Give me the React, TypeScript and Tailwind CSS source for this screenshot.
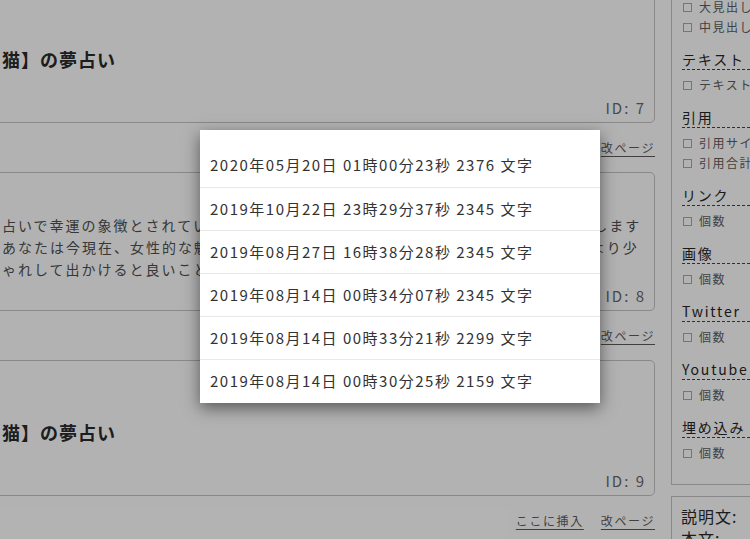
import React from "react";

const rows = [
    "2020年05月20日 01時00分23秒 2376 文字",
    "2019年10月22日 23時29分37秒 2345 文字",
    "2019年08月27日 16時38分28秒 2345 文字",
    "2019年08月14日 00時34分07秒 2345 文字",
    "2019年08月14日 00時33分21秒 2299 文字",
    "2019年08月14日 00時30分25秒 2159 文字",
];

const bodyLines = [
    "占いで幸運の象徴とされている猫の夢はあなたに幸せな出来事が訪れることを暗示します",
    "あなたは今現在、女性的な魅力が高まっている時期です。普段の服装やメイクを、より少",
    "ゃれして出かけると良いことが起こるでしょう。",
];

type SideGroup = { title: string; items: string[] };

const groups: SideGroup[] = [
    { title: "テキスト", items: ["テキスト数"] },
    { title: "引用", items: ["引用サイト", "引用合計"] },
    { title: "リンク", items: ["個数"] },
    { title: "画像", items: ["個数"] },
    { title: "Twitter", items: ["個数"] },
    { title: "Youtube", items: ["個数"] },
    { title: "埋め込み", items: ["個数"] },
];

function CheckItem({ label }: { label: string }) {
    return (
        <div className="flex h-[20px] items-center gap-[7px] whitespace-nowrap text-[12px] tracking-[1.5px] text-[#5e5e5e]">
            <span className="h-[9px] w-[9px] shrink-0 border border-[#aaa] bg-white" />
            <span>{label}</span>
        </div>
    );
}

function LinkRow() {
    return (
        <div className="flex h-[49px] items-center justify-end gap-[17px] text-[12px] tracking-[1.6px] text-[#5c5c5c]">
            <span className="underline underline-offset-[3px]">ここに挿入</span>
            <span className="underline underline-offset-[3px]">改ページ</span>
        </div>
    );
}

function TitleCard({ id }: { id: number }) {
    return (
        <div className="flex h-[136px] flex-col rounded-[5px] border border-[#c4c4c4] bg-white pl-[21px] pr-[8px] pt-[58px]">
            <div className="text-[18px] font-bold leading-[27px] tracking-[1px] text-[#2a2a2a]">
                猫】の夢占い
            </div>
            <div className="mt-auto pb-[4px] text-right text-[15px] leading-[20px] tracking-[2px] text-[#6a6a6a]">
                ID: {id}
            </div>
        </div>
    );
}

function TextCard({ id }: { id: number }) {
    return (
        <div className="flex h-[139px] flex-col rounded-[5px] border border-[#c4c4c4] bg-white pl-[21px] pr-[8px] pt-[41px]">
            <div className="text-[14px] leading-[22px] tracking-[2px] text-[#505050]">
                {bodyLines.map(line => (
                    <div key={line} className="whitespace-nowrap">
                        {line}
                    </div>
                ))}
            </div>
            <div className="mt-auto pb-[4px] text-right text-[15px] leading-[20px] tracking-[2px] text-[#6a6a6a]">
                ID: {id}
            </div>
        </div>
    );
}

export default function App() {
    return (
        <div className="relative h-[539px] w-[750px] overflow-hidden bg-white font-['Noto_Sans_CJK_JP','Noto_Sans',sans-serif]">
            <div className="flex gap-[16px]">
                {/* 記事カード列（左にスクロールされた状態） */}
                <div className="-ml-[20px] -mt-[13px] flex w-[675px] shrink-0 flex-col">
                    <TitleCard id={7} />
                    <LinkRow />
                    <TextCard id={8} />
                    <LinkRow />
                    <TitleCard id={9} />
                    <LinkRow />
                </div>

                {/* サイドバー */}
                <div className="flex w-[140px] shrink-0 flex-col">
                    <div className="-mt-[24px] border border-[#c4c4c4] bg-white pb-[21px] pl-[11px] pt-[20px]">
                        <CheckItem label="大見出し" />
                        <CheckItem label="中見出し" />
                        {groups.map(g => (
                            <div key={g.title}>
                                <div className="-ml-[1px] mt-[12px] whitespace-nowrap border-b border-dashed border-[#444] text-[14px] leading-[20px] tracking-[1.8px] text-[#262626]">
                                    {g.title}
                                </div>
                                <div className="mt-[5px]">
                                    {g.items.map(item => (
                                        <CheckItem key={item} label={item} />
                                    ))}
                                </div>
                            </div>
                        ))}
                    </div>
                    <div className="mt-[11px] border border-[#c4c4c4] bg-white pl-[9px] pt-[8px] text-[16px] leading-[22px] tracking-[1px] text-[#2a2a2a]">
                        <div>説明文:</div>
                        <div>本文:</div>
                    </div>
                </div>
            </div>

            {/* 背景の暗転 */}
            <div className="absolute inset-0 bg-black/30" />

            {/* 履歴モーダル */}
            <div className="absolute left-[200px] top-[130px] w-[400px] bg-white pb-[1px] pt-[14px] shadow-[0_5px_15px_rgba(0,0,0,0.5)]">
                {rows.map((r, i) => (
                    <div
                        key={r}
                        className={`flex h-[43px] items-center pl-[10px] text-[15px] tracking-[1.5px] text-[#333] ${i > 0 ? "border-t border-[#e8e8e8]" : ""}`}
                    >
                        {r}
                    </div>
                ))}
            </div>
        </div>
    );
}
